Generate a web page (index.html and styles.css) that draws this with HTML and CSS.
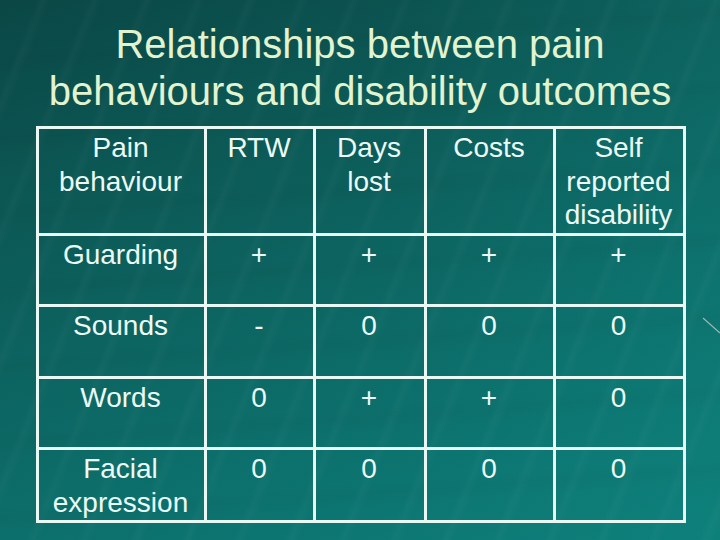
FILE: index.html
```html
<!DOCTYPE html>
<html>
<head>
<meta charset="utf-8">
<link rel="stylesheet" href="styles.css">
</head>
<body>
<div class="slide">
  <svg class="deco" width="20" height="20" viewBox="0 0 20 20"><line x1="1" y1="2" x2="18" y2="17" stroke="#9fb8b4" stroke-width="1.2"/></svg>
  <h1 class="title">Relationships between pain<br>behaviours and disability outcomes</h1>
  <div class="grid">
    <div class="cell">Pain behaviour</div>
    <div class="cell">RTW</div>
    <div class="cell">Days lost</div>
    <div class="cell">Costs</div>
    <div class="cell">Self reported disability</div>

    <div class="cell">Guarding</div>
    <div class="cell">+</div>
    <div class="cell">+</div>
    <div class="cell">+</div>
    <div class="cell">+</div>

    <div class="cell">Sounds</div>
    <div class="cell">-</div>
    <div class="cell">0</div>
    <div class="cell">0</div>
    <div class="cell">0</div>

    <div class="cell">Words</div>
    <div class="cell">0</div>
    <div class="cell">+</div>
    <div class="cell">+</div>
    <div class="cell">0</div>

    <div class="cell">Facial expression</div>
    <div class="cell">0</div>
    <div class="cell">0</div>
    <div class="cell">0</div>
    <div class="cell">0</div>
  </div>
</div>
</body>
</html>
```
FILE: styles.css
```css
html, body {
  margin: 0;
  padding: 0;
}
body {
  width: 720px;
  height: 540px;
  overflow: hidden;
  font-family: "Liberation Sans", Arial, sans-serif;
}
.slide {
  position: relative;
  width: 720px;
  height: 540px;
  overflow: hidden;
  background:
    repeating-linear-gradient(112deg, rgba(255,255,255,0) 0px, rgba(255,255,255,0) 34px, rgba(255,255,255,0.025) 40px, rgba(255,255,255,0) 48px),
    repeating-linear-gradient(176deg, rgba(0,0,0,0) 0px, rgba(0,0,0,0) 50px, rgba(0,0,0,0.025) 62px, rgba(0,0,0,0) 76px),
    linear-gradient(to right, rgba(20,150,140,0) 55%, rgba(20,150,140,0.12) 100%),
    linear-gradient(160deg, #0a4745 0%, #0c5a57 30%, #0c6b67 60%, #0d7874 85%, #0d7e79 100%);
  display: flex;
  flex-direction: column;
  align-items: flex-start;
}
.deco {
  position: absolute;
  left: 702px;
  top: 316px;
}
.title {
  align-self: stretch;
  margin: 21px 0 0 0;
  font-weight: normal;
  font-size: 40px;
  line-height: 47px;
  text-align: center;
  color: #e2f3cf;
}
.grid {
  margin: 11px 0 0 36px;
  display: grid;
  grid-template-columns: 168px 109px 111px 129px 130px;
  grid-template-rows: 107px 71px 72px 71px 73px;
  border-top: 3px solid #eaf8f3;
  border-left: 3px solid #eaf8f3;
}
.cell {
  box-sizing: border-box;
  border-right: 3px solid #eaf8f3;
  border-bottom: 3px solid #eaf8f3;
  padding: 2px 3px 0 1px;
  text-align: center;
  font-size: 28px;
  line-height: 33.5px;
  color: #ecfaf6;
}
```
